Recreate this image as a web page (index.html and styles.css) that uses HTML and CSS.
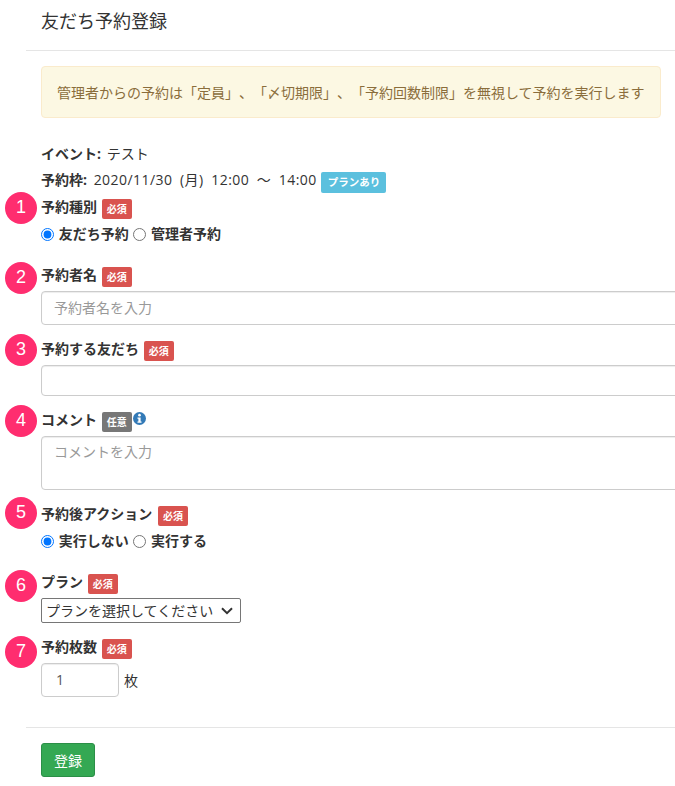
FILE: index.html
```html
<!DOCTYPE html>
<html lang="ja">
<head>
    <meta charset="UTF-8">
    <meta name="viewport" content="width=device-width, initial-scale=1.0">
    <title>友だち予約登録</title>
    <link rel="stylesheet" href="styles.css">
</head>
<body>
    <div class="panel">
        <div class="panel-heading">友だち予約登録</div>
        <form class="panel-body">
            <div class="alert">管理者からの予約は「定員」、「〆切期限」、「予約回数制限」を無視して予約を実行します</div>

            <p class="event"><b>イベント:</b> テスト</p>
            <p class="slot"><b>予約枠:</b> <span class="slot-time">2020/11/30 (月) 12:00 〜 14:00</span> <span class="badge badge-info">プランあり</span></p>

            <div class="field field-type">
                <span class="step">1</span>
                <label class="label">予約種別 <span class="badge badge-required">必須</span></label>
                <div class="radios">
                    <label><input type="radio" name="kind" checked> 友だち予約</label>
                    <label><input type="radio" name="kind"> 管理者予約</label>
                </div>
            </div>

            <div class="field field-name">
                <span class="step">2</span>
                <label class="label">予約者名 <span class="badge badge-required">必須</span></label>
                <input class="control" type="text" placeholder="予約者名を入力">
            </div>

            <div class="field field-friend">
                <span class="step">3</span>
                <label class="label">予約する友だち <span class="badge badge-required">必須</span></label>
                <input class="control control-short" type="text">
            </div>

            <div class="field field-comment">
                <span class="step">4</span>
                <label class="label">コメント <span class="badge badge-optional">任意</span><svg class="info" viewBox="0 0 14 14" width="13" height="13"><circle cx="7" cy="7" r="7" fill="#337ab7"/><circle cx="7" cy="3.4" r="1.4" fill="#fff"/><path d="M4.8 5.8h3.4v4.4h1v1.5H4.8v-1.5h1V7.3h-1z" fill="#fff"/></svg></label>
                <textarea class="control control-area" placeholder="コメントを入力"></textarea>
            </div>

            <div class="field field-action">
                <span class="step">5</span>
                <label class="label label-action">予約後アクション <span class="badge badge-required">必須</span></label>
                <div class="radios">
                    <label><input type="radio" name="action" checked> 実行しない</label>
                    <label><input type="radio" name="action"> 実行する</label>
                </div>
            </div>

            <div class="field field-plan">
                <span class="step">6</span>
                <label class="label">プラン <span class="badge badge-required">必須</span></label>
                <select class="plan-select">
                    <option>プランを選択してください</option>
                </select>
            </div>

            <div class="field field-count">
                <span class="step">7</span>
                <label class="label">予約枚数 <span class="badge badge-required">必須</span></label>
                <div class="count-row">
                    <input class="control control-count" type="text" value="1">
                    <span>枚</span>
                </div>
            </div>
        </form>
        <div class="panel-footer">
            <button class="btn-submit" type="button">登録</button>
        </div>
    </div>
</body>
</html>
```
FILE: styles.css
```css
html, body {
    overflow-x: hidden;
}
body {
    font-family: "Open Sans", "Noto Sans CJK JP", sans-serif;
    font-size: 14px;
    line-height: 21px;
    color: #333;
    background-color: #fff;
    margin: 0;
    text-spacing-trim: space-all;
}
.panel {
    margin-left: 26px;
}
.panel-heading {
    font-size: 18px;
    line-height: 26px;
    padding: 8px 15px 16px;
    border-bottom: 1px solid #e5e5e5;
}
.panel-body {
    padding: 15px 14px 30px 15px;
    border-bottom: 1px solid #e5e5e5;
}
.alert {
    color: #8a6d3b;
    background-color: #fcf8e3;
    border: 1px solid #faebcc;
    border-radius: 4px;
    padding: 14.5px 15px;
    margin-bottom: 25px;
    white-space: nowrap;
}
.event, .slot {
    margin: 0;
}
.event {
    margin-bottom: 5px;
}
.slot {
    margin-bottom: 3px;
    height: 21px;
}
b, .label {
    font-weight: 700;
}
b {
    margin-right: 2px;
}
.slot-time {
    margin-left: 1px;
    letter-spacing: 0.45px;
    word-spacing: 3.5px;
}
.badge {
    display: inline-block;
    color: #fff;
    font-size: 10px;
    font-weight: 700;
    line-height: 20px;
    height: 20px;
    padding: 0 5px;
    margin-left: 1px;
    border-radius: 2px;
    vertical-align: top;
}
.badge-info {
    background-color: #5bc0de;
    height: 21px;
    line-height: 21px;
    padding: 0 6.25px;
    margin-top: 3px;
    font-size: 10.5px;
}
.badge-required {
    background-color: #d9534f;
}
.badge-optional {
    background-color: #777;
}
.field {
    position: relative;
}
.step {
    position: absolute;
    left: -36px;
    top: -7px;
    width: 32px;
    height: 32px;
    border-radius: 50%;
    background-color: #ff2d6f;
    color: #fff;
    font-family: "Liberation Sans", sans-serif;
    font-size: 18px;
    font-weight: 400;
    line-height: 30px;
    text-align: center;
}
.label {
    display: block;
    height: 20px;
    margin-bottom: 4px;
    line-height: 16px;
}
.label-action .badge {
    margin-left: 2px;
}
.radios {
    font-weight: 700;
    height: 21px;
    margin-top: 4px;
}
.radios label:first-child {
    margin-right: 1px;
}
.radios input {
    margin: 0 1px 0 0;
    vertical-align: -2px;
}
.control {
    display: block;
    width: 680px;
    height: 34px;
    padding: 0 12px 2px;
    box-sizing: border-box;
    border: 1px solid #ccc;
    border-radius: 4px;
    font-family: inherit;
    font-size: 14px;
    color: #555;
    box-shadow: inset 0 1px 1px rgba(0, 0, 0, 0.075);
}
.control::placeholder {
    color: #999;
}
.control-short {
    height: 31px;
}
.control-area {
    height: 54px;
    padding: 4px 12px;
    line-height: 21px;
    resize: none;
}
.field-type {
    margin-top: 9px;
}
.field-name {
    margin-top: 23px;
}
.field-name .step {
    top: -5px;
}
.field-friend,
.field-comment,
.field-action,
.field-count {
    margin-top: 16px;
}
.field-action .step {
    top: -9px;
}
.field-plan {
    margin-top: 23px;
}
.field-plan .step {
    top: -4px;
}
.field-count .step {
    top: -3px;
}
.info {
    margin-left: 1px;
    vertical-align: top;
}
.plan-select {
    display: block;
    width: 200px;
    height: 25px;
    font-family: inherit;
    font-size: 14px;
    color: #333;
    border: 1px solid #767676;
    border-radius: 2px;
    padding: 0 0 0 4px;
    appearance: none;
    background: #fff url("data:image/svg+xml,%3Csvg xmlns='http://www.w3.org/2000/svg' width='12' height='8'%3E%3Cpath d='M1 1.2l5 5 5-5' fill='none' stroke='%23333' stroke-width='2'/%3E%3C/svg%3E") no-repeat 179px 8px;
}
.count-row {
    display: flex;
    align-items: center;
    gap: 5px;
}
.control-count {
    width: 78px;
    padding-left: 14px;
}
.panel-footer {
    padding: 15px;
}
.btn-submit {
    width: 54px;
    height: 34px;
    background-color: #34a853;
    color: #fff;
    border: 1px solid #2b8f47;
    border-radius: 3px;
    font-family: inherit;
    font-size: 14px;
    padding: 0;
}
```
